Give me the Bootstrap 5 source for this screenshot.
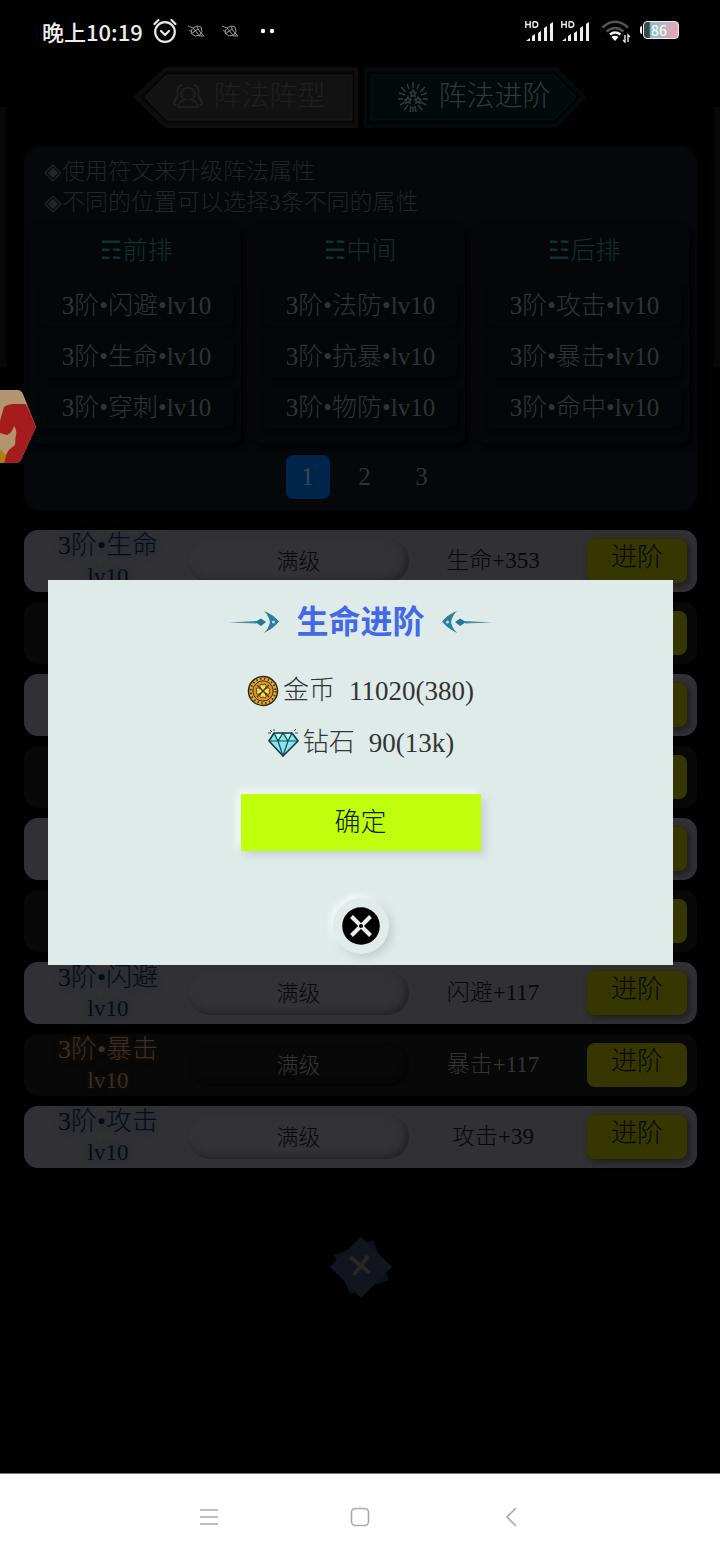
<!DOCTYPE html>
<html lang="zh-CN">
<head>
<meta charset="utf-8">
<meta name="viewport" content="width=device-width, initial-scale=1">
<title>阵法进阶</title>
<link href="https://cdn.jsdelivr.net/npm/bootstrap@5.3.0/dist/css/bootstrap.min.css" rel="stylesheet">
<style>
  :root { --game-font: "Liberation Serif", "AR PL UKai CN", "Noto Sans CJK SC", "DejaVu Sans", serif; }
  body { background: #010101; font-family: var(--game-font); font-weight: 300; min-height: 100vh; }
  button { font-family: inherit; font-weight: inherit; }
  .statusbar { height: 66px; padding: 0 41px 4px 42px; color: #ececec; font: 500 22px/30px "Noto Sans CJK SC", sans-serif; }
  .battery { width: 40px; height: 20px; }
  .battery-level { right: 0; top: 0; width: 36px; height: 18px; border-radius: 4px; border: 1px solid #eee; background: linear-gradient(90deg, #39494b 0 15%, #8dc3c6 20%, #c3aebb 60%, #e2a9bd); color: #e8ffff; font: 500 14px/16px "Noto Sans CJK SC", sans-serif; padding-left: 7px; }
  .battery-cap { left: 1px; top: 5px; width: 2px; height: 8px; background: #eee; border-radius: 2px 0 0 2px; }

  .tabs { padding: 0 133px; gap: 4px; height: 62px; }
  .tab-btn { flex: 1 1 0; background: none; border: 0; padding: 0; font-size: 28px; line-height: 40px; color: #202020; }
  .tab-btn.is-on { color: #343838; }
  .tab-shape { left: 0; top: 0; }
  .tab-text { gap: 10px; }

  .content-col { padding: 0 23px 0 24px; }
  .panel { margin-top: 19px; padding: 9px 8px 11px; border-radius: 16px; background: #05070a; box-shadow: 0 0 8px #06080a; color: #2e3032; }
  .notes { padding-left: 12px; font-size: 23px; line-height: 31px; color: #222426; }
  .groups { margin-top: 12px; gap: 15px; }
  .group { background: #040608; border-radius: 8px; padding: 0 8px 16px; box-shadow: 3px 3px 6px #000, -3px -3px 6px #07090b; }
  .group h2 { margin: 0 0 14px; font-size: 25px; line-height: 42px; font-weight: 300; color: #0c3232; }
  .slots { gap: 11px; font-size: 25px; line-height: 40px; color: #303236; }
  .slots li { background: #04070a; border-radius: 6px; box-shadow: 2px 2px 5px #020304; }
  .pager { margin-top: 11px; gap: 13px; }
  .pager button { width: 44px; height: 44px; border: 0; border-radius: 7px; background: #05070a; color: #303236; font-size: 25px; line-height: 44px; padding: 0; }
  .pager button.is-on { background: #00254a; color: #3a4450; }

  .upgrades { margin-top: 20px; gap: 10px; }
  .upgrade { display: grid; grid-template-columns: 164fr 221fr 178fr 100fr; height: 62px; padding-right: 10px; border-radius: 14px; background: #313135; color: #080808; }
  .upgrade:nth-child(even) { background: #080808; color: #343434; }
  .stat-name { font-size: 26px; line-height: 32px; padding-left: 4px; color: #080b14; text-shadow: 0 0 6px #1c2735; }
  .stat-lv { font-size: 23px; line-height: 30px; }
  .upgrade:nth-child(even) .stat-name { color: #3b2e27; text-shadow: 0 0 6px #24170c; }
  .level-bar { height: 44px; border-radius: 22px; font-size: 22px; background: #333337; box-shadow: inset -3px -3px 7px #232326, inset 3px 3px 6px #363639; }
  .upgrade:nth-child(even) .level-bar { background: #080808; box-shadow: inset -3px -3px 6px #050505; }
  .stat-gain { font-size: 23px; padding-right: 10px; }
  .go-btn { height: 44px; border: 0; border-radius: 8px; background: #353600; color: #080900; font-size: 26px; line-height: 36px; padding: 0 0 6px; box-shadow: 3px 3px 7px #1d1d20, 0 0 4px #353600; }
  .upgrade:nth-child(even) .go-btn { box-shadow: none; }
  .page-close { margin-top: 68px; }
  .edge-strip { top: 107px; width: 6px; height: 260px; background: #080706; }
  .float-badge { left: 0; top: 390px; }

  .overlay { padding: 72px 47px 0 48px; }
  .dialog-box { background: #deebe8; padding: 20px 16px 11px; color: #333; }
  .dialog-box h1 { font-size: 32px; line-height: 44px; font-weight: 700; color: #4169e8; gap: 17px; }
  .costs { margin-top: 21px; font-size: 27px; line-height: 52px; }
  .cost-name { font-size: 26px; margin-right: 14px; }
  .ok-btn { margin-top: 25px; width: 240px; height: 57px; border: 0; background: #bfff0e; color: #151b05; font-size: 26px; box-shadow: 4px 4px 8px #c8cdd6, -4px -4px 8px #f8fafa; }
  .close-btn { margin-top: 47px; width: 56px; height: 56px; border: 0; background: #e1ecea; box-shadow: 4px 4px 9px #c6cdd2, -3px -3px 6px #f8fafa; }
  .sysnav { height: 87px; background: #fff; border-top: 1px solid #777; padding: 0 199px; }
  .sysnav button { background: none; border: 0; padding: 0; }
</style>
</head>
<body class="d-flex flex-column">
<svg class="d-none" aria-hidden="true">
  <symbol id="signal" viewBox="0 0 28 22">
    <path fill="none" stroke="#eee" stroke-width="1.4" d="M.8 1v7M5.2 1v7M.8 4.500H5M8 1.700v5.600M8 1.700h2a2.800 2.800 0 0 1 0 5.600H8"/>
    <path fill="#eee" d="M1 21l4-3v3zM7 16l3-2v7H7zM13 13l3-2v10h-3zM19 8l3-2v15h-3zM25 4l3-2v19h-3z"/>
  </symbol>
  <symbol id="bird" viewBox="0 0 18 14">
    <path fill="none" stroke="#aaa" stroke-width=".9" d="M1 2l5 2 4-2 4 1 1 4-2 4-5 1-4-3 1-4M2 6l3 2M4 10l7-5M10 3l3 5 4 4-5 0M6 4l6 7"/>
  </symbol>
  <symbol id="arrow" viewBox="0 0 50 24">
    <path fill="#4a8ba0" d="M0 12.500L27 11v2.500z"/>
    <path fill="#237792" d="M26 12l6-3.500 5 3.500-5 4z"/>
    <path fill="#2c7f97" d="M35 1q10 4 15 10.500Q45 18 35 23q5-5 6-11-1-6-6-11z"/>
    <circle cx="44.500" cy="12" r="1.600" fill="#a8e0e6"/>
  </symbol>
</svg>

<div class="position-relative flex-grow-1">
  <header class="statusbar d-flex align-items-center justify-content-between">
    <div class="d-flex align-items-center">
      <span>晚上10:19</span>
      <svg class="ms-2" width="28" height="26" viewBox="0 0 28 26" fill="none" stroke="#eaeaea" stroke-width="2.200" stroke-linecap="round" stroke-linejoin="round"><circle cx="14" cy="14" r="9.800"/><path d="M10 13l4 4 4-4M3.500 6l4-4M24.500 6l-4-4"/></svg>
      <svg class="ms-2" width="18" height="14"><use href="#bird"/></svg>
      <svg class="ms-3" width="18" height="14"><use href="#bird"/></svg>
      <svg class="ms-3" width="24" height="8"><circle cx="8" cy="4" r="2.200" fill="#fff"/><circle cx="17" cy="4" r="2.200" fill="#fff"/></svg>
    </div>
    <div class="d-flex align-items-center gap-2">
      <svg width="28" height="22"><use href="#signal"/></svg>
      <svg width="28" height="22"><use href="#signal"/></svg>
      <svg class="ms-1" width="30" height="24" viewBox="0 0 30 24" fill="none"><g stroke-width="2.600"><path stroke="#555" d="M1.500 8.500Q14 -3 27 8.500M5.500 12.500q8.500-7 17 0"/><path stroke="#eee" d="M9 15.500q5-4 10.500 0"/></g><path fill="#fff" d="M10.500 18q3.500-2.500 7 0L14 22z"/><path stroke="#ddd" stroke-width="1.500" d="M24 16v7l-2-2M27 23v-7l2 2"/></svg>
      <div class="battery position-relative"><span class="battery-cap position-absolute"></span><span class="battery-level position-absolute">86</span></div>
    </div>
  </header>

  <nav class="tabs d-flex" aria-label="阵法">
    <button class="tab-btn position-relative d-flex align-items-center justify-content-center" type="button">
      <svg class="tab-shape position-absolute w-100 h-100" viewBox="0 0 224 62" preserveAspectRatio="none"><path fill="#0d0d0d" d="M0 31L32 1h192v61H32z"/><path fill="#060606" d="M7 31L34 5h186v52H34z"/><path fill="#121212" stroke="#1b1b1b" d="M12 31l22-22h184v45H34z"/></svg>
      <span class="tab-text position-relative d-flex align-items-center ps-2">
        <svg width="30" height="26" viewBox="0 0 30 26" fill="none" stroke="#202020" stroke-width="2"><path d="M15 4a6 6 0 0 1 3 11.500q6 2 7 7.500H5q1-5.500 7-7.500A6 6 0 0 1 15 4zM9 1Q3 3 5 10l-1 3q-3 3-3 8h3M21 1q6 2 4 9l1 3q3 3 3 8h-3"/></svg>
        <span>阵法阵型</span>
      </span>
    </button>
    <button class="tab-btn is-on position-relative d-flex align-items-center justify-content-center" type="button" aria-current="page">
      <svg class="tab-shape position-absolute w-100 h-100" viewBox="0 0 224 62" preserveAspectRatio="none"><path fill="#040a0c" d="M2 1h192l30 30-30 31H2z"/><path fill="#010405" d="M5 5h186l27 26-27 27H5z"/><path fill="#020a0c" stroke="#071416" d="M9 9h182l22 22-22 23H9z"/></svg>
      <span class="tab-text position-relative d-flex align-items-center">
        <svg width="30" height="30" viewBox="0 0 30 30" fill="none" stroke="#34383a" stroke-width="1.500"><path d="M15 8l1 2 2 .500-1.500 1.500.500 2.500-2-1-2 1 .500-2.500L12 10.500l2-.500zM10 15l1 2 2 .500-1.500 1.500.500 2-2-1-2 1 .500-2L7 17.500l2-.500zM20 15l1 2 2 .500-1.500 1.500.500 2-2-1-2 1 .500-2-1.500-1.500 2-.500zM15 0v6M9 2l2 5M21 2l-2 5M3 5l5 5M27 5l-5 5M1 11l6 2M29 11l-6 2M0 17h5M30 17h-5M2 23l5-3M28 23l-5-3M6 28l4-5M24 28l-4-5M12 30l1-6M18 30l-1-6M15 25v5"/></svg>
        <span>阵法进阶</span>
      </span>
    </button>
  </nav>

  <main class="content-col">
    <section class="panel">
      <div class="notes"><div>◈使用符文来升级阵法属性</div><div>◈不同的位置可以选择3条不同的属性</div></div>
      <div class="groups d-flex text-center">
        <div class="group flex-fill"><h2>☶前排</h2><ul class="slots list-unstyled d-flex flex-column mb-0"><li>3阶•闪避•lv10</li><li>3阶•生命•lv10</li><li>3阶•穿刺•lv10</li></ul></div>
        <div class="group flex-fill"><h2>☵中间</h2><ul class="slots list-unstyled d-flex flex-column mb-0"><li>3阶•法防•lv10</li><li>3阶•抗暴•lv10</li><li>3阶•物防•lv10</li></ul></div>
        <div class="group flex-fill"><h2>☳后排</h2><ul class="slots list-unstyled d-flex flex-column mb-0"><li>3阶•攻击•lv10</li><li>3阶•暴击•lv10</li><li>3阶•命中•lv10</li></ul></div>
      </div>
      <div class="pager d-flex justify-content-center ps-2"><button class="is-on" type="button">1</button><button type="button">2</button><button type="button">3</button></div>
    </section>

    <section class="upgrades d-flex flex-column">
      <div class="upgrade align-items-center text-center"><div class="stat-name">3阶•生命<div class="stat-lv">lv10</div></div><div class="level-bar d-flex align-items-center justify-content-center">满级</div><div class="stat-gain">生命+353</div><button class="go-btn" type="button">进阶</button></div>
      <div class="upgrade align-items-center"><span></span><span></span><span></span><button class="go-btn" type="button" aria-label="进阶"></button></div>
      <div class="upgrade align-items-center"><span></span><span></span><span></span><button class="go-btn" type="button" aria-label="进阶"></button></div>
      <div class="upgrade align-items-center"><span></span><span></span><span></span><button class="go-btn" type="button" aria-label="进阶"></button></div>
      <div class="upgrade align-items-center"><span></span><span></span><span></span><button class="go-btn" type="button" aria-label="进阶"></button></div>
      <div class="upgrade align-items-center"><span></span><span></span><span></span><button class="go-btn" type="button" aria-label="进阶"></button></div>
      <div class="upgrade align-items-center text-center"><div class="stat-name">3阶•闪避<div class="stat-lv">lv10</div></div><div class="level-bar d-flex align-items-center justify-content-center">满级</div><div class="stat-gain">闪避+117</div><button class="go-btn" type="button">进阶</button></div>
      <div class="upgrade align-items-center text-center"><div class="stat-name">3阶•暴击<div class="stat-lv">lv10</div></div><div class="level-bar d-flex align-items-center justify-content-center">满级</div><div class="stat-gain">暴击+117</div><button class="go-btn" type="button">进阶</button></div>
      <div class="upgrade align-items-center text-center"><div class="stat-name">3阶•攻击<div class="stat-lv">lv10</div></div><div class="level-bar d-flex align-items-center justify-content-center">满级</div><div class="stat-gain">攻击+39</div><button class="go-btn" type="button">进阶</button></div>
    </section>

    <div class="page-close text-center">
      <button class="border-0 bg-transparent p-0" type="button" aria-label="返回"><svg class="d-block" width="62" height="62" viewBox="0 0 62 62"><path fill="#0e1119" d="M4 19L43 4l16 40-39 14z"/><path fill="#10151e" d="M31 1l31 30-31 31L0 31z"/><path stroke="#2a2622" stroke-width="4" d="M20 21l20 16M38 20L24 39"/></svg></button>
    </div>
  </main>

  <div class="edge-strip position-absolute start-0"></div>
  <div class="edge-strip position-absolute end-0"></div>

  <div class="overlay position-absolute top-0 start-0 w-100 h-100 d-flex flex-column justify-content-center">
    <div class="dialog-box d-flex flex-column align-items-center" role="dialog" aria-labelledby="dlg-title">
      <h1 class="d-flex align-items-center mb-0"><svg width="50" height="24"><use href="#arrow"/></svg><span id="dlg-title">生命进阶</span><svg width="50" height="24"><use href="#arrow" transform="translate(50 0) scale(-1 1)"/></svg></h1>
      <div class="costs">
        <div class="d-flex align-items-center justify-content-center"><svg class="me-1" width="32" height="32" viewBox="0 0 32 32"><circle cx="16" cy="16" r="14.500" fill="#e5ad31" stroke="#2b2515" stroke-width="1.500"/><circle cx="16" cy="16" r="12.300" fill="none" stroke="#4a3a13" stroke-width="2" stroke-dasharray="1.500 2.400"/><circle cx="16" cy="16" r="10.200" fill="#d79725" stroke="#3b2c10"/><path fill="#fbd85a" stroke="#4a3914" stroke-width=".9" d="M16 16q-5-5-2-7l2 1 2-1q3 2-2 7zq5-5 7-2l-1 2 1 2q-2 3-7-2zq5 5 2 7l-2-1-2 1q-3-2 2-7zq-5 5-7 2l1-2-1-2q2-3 7 2z"/><path stroke="#4a3914" stroke-width="1.200" d="M10 10l12 12M22 10L10 22"/></svg><span class="cost-name">金币</span><span>11020(380)</span></div>
        <div class="d-flex align-items-center justify-content-center"><svg class="me-1" width="32" height="28" viewBox="0 0 32 28"><path fill="#88e6ee" stroke="#143b43" stroke-width="1.600" stroke-linejoin="round" d="M7 4h18l6 8-15 15L2 12z"/><path fill="none" stroke="#164850" stroke-width="1.200" d="M2 12h29M7 4l4 8 5-8 5 8 4-8M11 12l5 15 5-15"/><path fill="#c9fafa" d="M9 5h5l-3 5zM19 5h4l-2 5z"/><path stroke="#33494c" d="M1 4h3M3 1l2 2M28 4h3M27 2l2-2M7 0v2"/></svg><span class="cost-name">钻石</span><span>90(13k)</span></div>
      </div>
      <button class="ok-btn" type="button">确定</button>
      <button class="close-btn rounded-circle d-flex align-items-center justify-content-center p-0" type="button" aria-label="关闭"><svg width="38" height="38" viewBox="0 0 38 38"><circle cx="19" cy="19" r="18.800" fill="#000"/><path stroke="#e6efec" stroke-width="4" d="M9.500 9.500l19 19M28.500 9.500l-19 19"/><circle cx="19" cy="19" r="2" fill="#000"/></svg></button>
    </div>
  </div>

  <svg class="float-badge position-absolute" width="37" height="74" viewBox="0 0 37 74"><path fill="#b2946f" d="M0 0h18q3 0 5 4l13 33-15 33q-2 3-5 3H0z"/><path fill="#a41c1b" d="M0 31L4 17q4-3 10-3h11q2 1 3 4l8 19-15 33q-2 3-5 3H4l2-8 9-16q3-8-1-13-2 7-7 9L0 43z"/><path fill="#b2946f" d="M0 45l7 4q6-2 7-9 2 5 1 15L5 63l-5-3z"/><path fill="#b17d0d" d="M0 59l6 6-2 8H0z"/></svg>
</div>

<footer class="sysnav d-flex align-items-center justify-content-between">
  <button type="button" aria-label="菜单"><svg class="d-block" width="20" height="20" fill="none" stroke="#aaa" stroke-width="1.600"><path d="M1 3h18M1 10h18M1 17h18"/></svg></button>
  <button type="button" aria-label="主页"><svg class="d-block" width="20" height="20" fill="none" stroke="#aaa" stroke-width="1.600"><rect x="1.500" y="1.500" width="17" height="17" rx="4"/></svg></button>
  <button type="button" aria-label="后退"><svg class="d-block" width="20" height="20" fill="none" stroke="#aaa" stroke-width="1.600"><path d="M15 1L6 10l9 9"/></svg></button>
</footer>
<script src="https://cdn.jsdelivr.net/npm/bootstrap@5.3.0/dist/js/bootstrap.bundle.min.js"></script>
</body>
</html>
